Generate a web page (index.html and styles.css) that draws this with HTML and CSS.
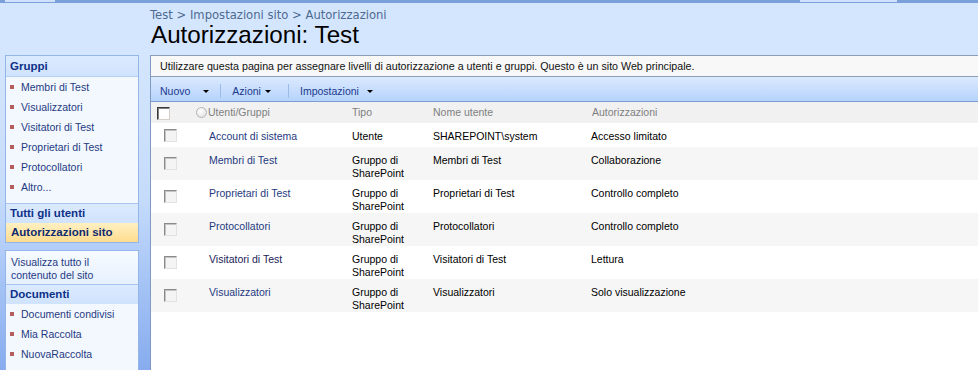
FILE: index.html
```html
<!DOCTYPE html>
<html lang="it">
<head>
  <meta charset="UTF-8" />
  <meta name="viewport" content="width=device-width, initial-scale=1.0" />
  <title>Autorizzazioni: Test</title>
  <link rel="stylesheet" href="styles.css">
</head>
<body>
  <div class="topbar"><span class="tab tab-left"></span><span class="tab tab-right"></span></div>
  <div class="titlearea">
    <div class="crumbs"><a href="#">Test</a> &gt; <a href="#">Impostazioni sito</a> &gt; Autorizzazioni</div>
    <h1>Autorizzazioni: Test</h1>
  </div>
  <div class="page">
    <div class="leftcol">
      <div class="navbox">
        <div class="navhead first">Gruppi</div>
        <ul class="navlist">
          <li><a href="#">Membri di Test</a></li>
          <li><a href="#">Visualizzatori</a></li>
          <li><a href="#">Visitatori di Test</a></li>
          <li><a href="#">Proprietari di Test</a></li>
          <li><a href="#">Protocollatori</a></li>
          <li><a href="#">Altro...</a></li>
        </ul>
        <div class="navhead sep">Tutti gli utenti</div>
        <div class="navhead selected">Autorizzazioni sito</div>
      </div>
      <div class="navbox second">
        <div class="viewall"><a href="#">Visualizza tutto il<br>contenuto del sito</a></div>
        <div class="navhead sep">Documenti</div>
        <ul class="navlist">
          <li><a href="#">Documenti condivisi</a></li>
          <li><a href="#">Mia Raccolta</a></li>
          <li><a href="#">NuovaRaccolta</a></li>
        </ul>
      </div>
    </div>
    <div class="main">
      <div class="desc">Utilizzare questa pagina per assegnare livelli di autorizzazione a utenti e gruppi. Questo è un sito Web principale.</div>
      <div class="toolbar">
        <span class="tb-item tb-new">Nuovo<i class="arrow"></i></span>
        <span class="tb-sep"></span>
        <span class="tb-item tb-actions">Azioni<i class="arrow"></i></span>
        <span class="tb-sep"></span>
        <span class="tb-item tb-settings">Impostazioni<i class="arrow"></i></span>
      </div>
      <div class="grid">
        <div class="row head">
          <div class="cell"><span class="cb cb-all"></span></div>
          <div class="cell"><span class="radio"></span>Utenti/Gruppi</div>
          <div class="cell">Tipo</div>
          <div class="cell">Nome utente</div>
          <div class="cell">Autorizzazioni</div>
        </div>
        <div class="row single">
          <div class="cell check"><span class="cb"></span></div>
          <div class="cell name"><a href="#">Account di sistema</a></div>
          <div class="cell">Utente</div>
          <div class="cell">SHAREPOINT\system</div>
          <div class="cell">Accesso limitato</div>
        </div>
        <div class="row alt">
          <div class="cell check"><span class="cb"></span></div>
          <div class="cell name"><a href="#">Membri di Test</a></div>
          <div class="cell">Gruppo di<br>SharePoint</div>
          <div class="cell">Membri di Test</div>
          <div class="cell">Collaborazione</div>
        </div>
        <div class="row">
          <div class="cell check"><span class="cb"></span></div>
          <div class="cell name"><a href="#">Proprietari di Test</a></div>
          <div class="cell">Gruppo di<br>SharePoint</div>
          <div class="cell">Proprietari di Test</div>
          <div class="cell">Controllo completo</div>
        </div>
        <div class="row alt">
          <div class="cell check"><span class="cb"></span></div>
          <div class="cell name"><a href="#">Protocollatori</a></div>
          <div class="cell">Gruppo di<br>SharePoint</div>
          <div class="cell">Protocollatori</div>
          <div class="cell">Controllo completo</div>
        </div>
        <div class="row">
          <div class="cell check"><span class="cb"></span></div>
          <div class="cell name"><a href="#" class="visited">Visitatori di Test</a></div>
          <div class="cell">Gruppo di<br>SharePoint</div>
          <div class="cell">Visitatori di Test</div>
          <div class="cell">Lettura</div>
        </div>
        <div class="row alt">
          <div class="cell check"><span class="cb"></span></div>
          <div class="cell name"><a href="#">Visualizzatori</a></div>
          <div class="cell">Gruppo di<br>SharePoint</div>
          <div class="cell">Visualizzatori</div>
          <div class="cell">Solo visualizzazione</div>
        </div>
      </div>
    </div>
  </div>
</body>
</html>
```

FILE: styles.css
```css
* { box-sizing: border-box; margin: 0; padding: 0; }
html, body { height: 100%; }
body { background: #d4e6fe; font-family: 'Liberation Sans', Arial, sans-serif; font-size: 10.5px; color: #000; overflow: hidden; }
a { color: #1f3a7f; text-decoration: none; }
ul { list-style: none; }

/* top tab strip */
.topbar { height: 3px; background: #7b9fd9; display: flex; }
.tab { height: 2px; background: #cfe1fb; }
.tab-left { margin-left: 5px; width: 50px; }
.tab-right { margin-left: 745px; width: 97px; }

/* title */
.titlearea { height: 52px; padding: 5px 0 0 150px; }
.crumbs { font-family: 'DejaVu Sans', Verdana, sans-serif; font-size: 11.6px; line-height: 14px; color: #4e6a90; }
.crumbs a { color: #4e6a90; }
h1 { font-weight: normal; font-size: 24.2px; line-height: 26px; margin-left: 1px; color: #000; }

.page { display: flex; height: 315px; }

/* quick launch */
.leftcol { width: 150px; flex: none; padding-left: 5px; background: linear-gradient(to bottom, #d4e6fe 0, #c6dcfc 140px, #a4c3f5 230px, #87abee 315px); }
.navbox { width: 134px; border: 1px solid #95b5ea; background: #f3f8ff; }
.navbox.second { margin-top: 7px; padding-bottom: 20px; }
.navhead { height: 19px; line-height: 19px; padding-left: 4px; font-weight: bold; font-size: 11.5px; color: #0f3188; background: linear-gradient(#dbeaff, #d0e3fd); }
.navhead.first { height: 21px; line-height: 20px; border-bottom: 1px solid #b7cff3; }
.navhead.sep { border-top: 1px solid #a9c6f1; height: 20px; }
.navhead.selected { background: linear-gradient(#fff0c2, #ffdc8e); color: #0f2a6e; padding-left: 5px; }
.navlist { padding-bottom: 6px; }
.navlist li { height: 20px; line-height: 20px; padding-left: 4px; display: flex; align-items: center; }
.navlist li::before { content: ""; width: 4px; height: 4px; background: #b35e5a; margin-right: 7px; }
.second .navlist { padding-bottom: 0; }
.viewall { padding: 5px 0 2px 5px; line-height: 13px; height: 33px; background: linear-gradient(#f7fbff, #e6f0ff); }

/* main area */
.main { flex: 1; background: #fff; border-left: 1px solid #7f9bc4; border-top: 1px solid #8b9fba; }
.desc { height: 21px; line-height: 20px; padding-left: 9px; font-size: 10.7px; background: #f8f8f8; border-bottom: 1px solid #8b9fba; color: #111; }
.toolbar { height: 25px; padding: 3px 0 0 9px; display: flex; align-items: center; background: linear-gradient(#dbe9fe, #b6d3fd); border-bottom: 1px solid #7d9cd0; color: #1b3a8c; }
.tb-item { display: flex; align-items: center; }
.arrow { display: inline-block; border-top: 3px solid #000; border-left: 3px solid transparent; border-right: 3px solid transparent; margin-top: 1px; }
.tb-new .arrow { margin-left: 13px; }
.tb-actions .arrow { margin-left: 4px; }
.tb-settings .arrow { margin-left: 8px; }
.tb-sep { width: 1px; height: 14px; background: #9bbbe8; margin: 0 11px; }
.tb-actions + .tb-sep { margin-left: 17px; }

/* list view */
.row { display: grid; grid-template-columns: 45px 156px 81px 158px 1fr; height: 33px; line-height: 13px; }
.row .cell { padding-top: 7px; white-space: nowrap; }
.row.single { height: 24px; }
.row.alt { background: #f6f6f6; }
.row.head { height: 21px; background: #f1f1f1; color: #7f7f7f; }
.row.head .cell { padding-top: 0; display: flex; align-items: center; }
.row.head .cell:last-child { padding-left: 1px; }
.cell.check { padding-top: 0; display: flex; align-items: center; padding-left: 13px; }
.cell.name { padding-left: 13px; }
a.visited { color: #1b2358; }

.cb { display: inline-block; width: 13px; height: 13px; border: 1px solid; border-color: #8a8a8a #e2e2e2 #e2e2e2 #8a8a8a; box-shadow: inset 1px 1px 0 #c4c4c4; background: #f4f4f4; }
.cb-all { margin-left: 6px; margin-top: 2px; border-color: #3a3a3a #d4d0c8 #d4d0c8 #3a3a3a; box-shadow: inset 1px 1px 0 #808080; background: #fff; }
.radio { display: inline-block; width: 11px; height: 11px; border-radius: 50%; border: 1px solid #b4b4b4; background: radial-gradient(circle at 40% 35%, #ffffff, #dcdcdc); margin-right: 1px; }
```
